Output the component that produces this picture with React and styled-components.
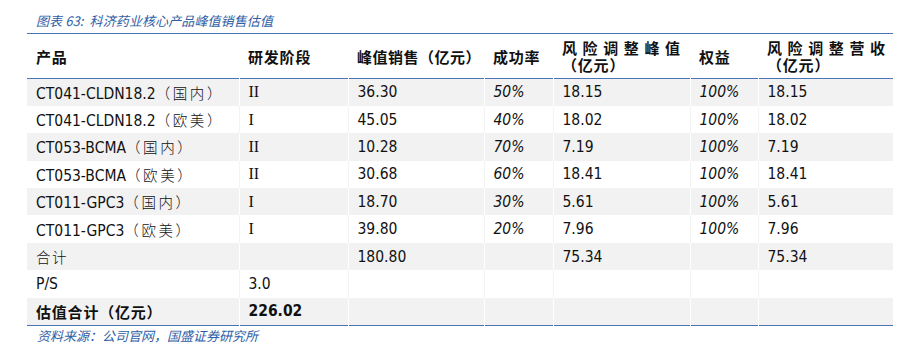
import React from "react";
import styled, { createGlobalStyle } from "styled-components";

const Global = createGlobalStyle`
  html, body { margin: 0; padding: 0; background: #fff; }
  body { width: 907px; height: 361px; overflow: hidden; }
`;

const LATIN = `"DejaVu Sans Condensed", "Open Sans", "Noto Sans CJK SC", sans-serif`;
const CJK = `"Noto Sans CJK SC", sans-serif`;
const BLUE = "#2f5ea6";
const LINE = "#4a74b8";
const SHADE = "#f2f2f2";

const Page = styled.div`
  padding: 0 14px 0 27px;
`;

const Caption = styled.div`
  height: 33px;
  box-sizing: border-box;
  padding: 11px 0 0 9px;
  font-family: ${CJK};
  font-style: italic;
  font-size: 13px;
  line-height: 20px;
  color: ${BLUE};
  letter-spacing: 0.1px;
`;

const Table = styled.table`
  width: 866px;
  table-layout: fixed;
  border-collapse: collapse;
  border-top: 1.5px solid ${LINE};
  border-bottom: 1.5px solid ${LINE};
`;

const HeadRow = styled.tr`
  height: 45px;
  border-bottom: 1.5px solid ${LINE};
`;

const Th = styled.th`
  padding: 0 0 0 9px;
  text-align: left;
  vertical-align: middle;
  font-family: ${CJK};
  font-weight: 600;
  font-size: 15px;
  line-height: 17px;
  letter-spacing: ${(p) => p.$ls || "0.8px"};
  color: #111;
  white-space: nowrap;
`;

const HeadLine = styled.span`
  display: block;
  height: 17px;
  line-height: 17px;
  letter-spacing: ${(p) => p.$ls || "0.8px"};
`;

const Row = styled.tr`
  height: 27.4px;
  background: ${(p) => (p.$shade ? SHADE : "#fff")};
`;

const Td = styled.td`
  padding: 0 0 0 9px;
  border-left: 1px solid ${(p) => (p.$shade ? "#fff" : "#f3f3f3")};
  vertical-align: middle;
  font-family: ${(p) => (p.$roman ? `"Liberation Serif", serif` : LATIN)};
  font-size: ${(p) => (p.$roman ? "16px" : "15.5px")};
  font-style: ${(p) => (p.$italic ? "italic" : "normal")};
  font-weight: ${(p) => (p.$bold ? 700 : 400)};
  color: #111;
  white-space: nowrap;
  &:first-child { border-left: none; }
`;

const Zh = styled.span`
  font-family: ${CJK};
  font-weight: 300;
  font-size: 14.5px;
  letter-spacing: ${(p) => p.$ls || "0"};
`;

const ZhHead = styled.span`
  font-family: ${CJK};
  font-weight: 600;
  font-size: 15px;
  letter-spacing: 0.8px;
`;

const Source = styled.div`
  padding: 2px 0 0 10px;
  font-family: ${CJK};
  font-style: italic;
  font-size: 13px;
  line-height: 16px;
  color: ${BLUE};
`;

const widths = [212, 109, 136, 69, 137, 68, 135];

const rows = [
  ["CT041-CLDN18.2", "（国内）", "II", "36.30", "50%", "18.15", "100%", "18.15"],
  ["CT041-CLDN18.2", "（欧美）", "I", "45.05", "40%", "18.02", "100%", "18.02"],
  ["CT053-BCMA", "（国内）", "II", "10.28", "70%", "7.19", "100%", "7.19"],
  ["CT053-BCMA", "（欧美）", "II", "30.68", "60%", "18.41", "100%", "18.41"],
  ["CT011-GPC3", "（国内）", "I", "18.70", "30%", "5.61", "100%", "5.61"],
  ["CT011-GPC3", "（欧美）", "I", "39.80", "20%", "7.96", "100%", "7.96"],
];

function DataRow({ shade, cells }) {
  return (
    <Row $shade={shade}>
      {cells.map((c, i) => (
        <Td key={i} $shade={shade} {...c.props}>
          {c.content}
        </Td>
      ))}
    </Row>
  );
}

const cell = (content, props = {}) => ({ content, props });

export default function App() {
  return (
    <>
      <Global />
      <Page>
        <Caption>图表 63:&nbsp; 科济药业核心产品峰值销售估值</Caption>
        <Table>
          <colgroup>
            {widths.map((w, i) => (
              <col key={i} style={{ width: w }} />
            ))}
          </colgroup>
          <thead>
            <HeadRow>
              <Th>产品</Th>
              <Th>研发阶段</Th>
              <Th $ls="0.5px">峰值销售（亿元）</Th>
              <Th>成功率</Th>
              <Th>
                <HeadLine $ls="5.6px">风险调整峰值</HeadLine>
                <HeadLine>（亿元）</HeadLine>
              </Th>
              <Th>权益</Th>
              <Th>
                <HeadLine $ls="5.6px">风险调整营收</HeadLine>
                <HeadLine>（亿元）</HeadLine>
              </Th>
            </HeadRow>
          </thead>
          <tbody>
            {rows.map((r, i) => (
              <DataRow
                key={i}
                shade={i % 2 === 0}
                cells={[
                  cell(
                    <>
                      {r[0]}
                      <Zh $ls="2.6px">{r[1]}</Zh>
                    </>
                  ),
                  cell(r[2], { $roman: true }),
                  cell(r[3]),
                  cell(r[4], { $italic: true }),
                  cell(r[5]),
                  cell(r[6], { $italic: true }),
                  cell(r[7]),
                ]}
              />
            ))}
            <DataRow
              shade
              cells={[
                cell(<Zh $ls="1.5px">合计</Zh>),
                cell(null),
                cell("180.80"),
                cell(null),
                cell("75.34"),
                cell(null),
                cell("75.34"),
              ]}
            />
            <DataRow
              shade={false}
              cells={[
                cell("P/S"),
                cell("3.0"),
                cell(null),
                cell(null),
                cell(null),
                cell(null),
                cell(null),
              ]}
            />
            <DataRow
              shade
              cells={[
                cell(<ZhHead>估值合计（亿元）</ZhHead>),
                cell("226.02", { $bold: true }),
                cell(null),
                cell(null),
                cell(null),
                cell(null),
                cell(null),
              ]}
            />
          </tbody>
        </Table>
        <Source>资料来源：公司官网，国盛证券研究所</Source>
      </Page>
    </>
  );
}
